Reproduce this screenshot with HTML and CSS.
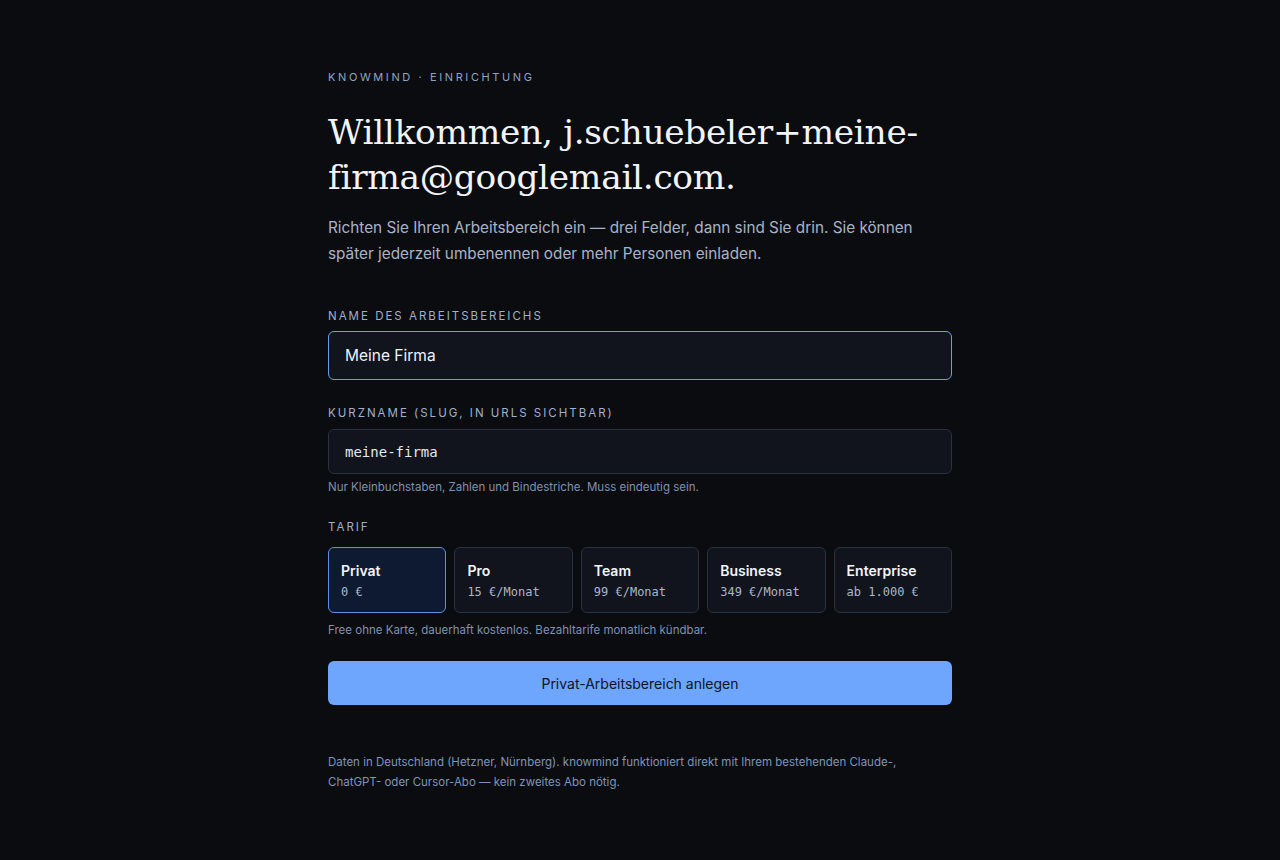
FILE: index.html
```html
<!DOCTYPE html>
<html lang="de">
<head>
<meta charset="utf-8">
<title>knowmind · Einrichtung</title>
<link rel="stylesheet" href="styles.css">
</head>
<body>
<main class="wrap">
  <div class="eyebrow">KNOWMIND · EINRICHTUNG</div>
  <h1 class="title">Willkommen, j.schuebeler+meine-firma@googlemail.com.</h1>
  <p class="lead">Richten Sie Ihren Arbeitsbereich ein — drei Felder, dann sind Sie drin. Sie können später jederzeit umbenennen oder mehr Personen einladen.</p>

  <form class="form">
    <div class="field field-name">
      <label class="label">NAME DES ARBEITSBEREICHS</label>
      <div class="input input-focus">Meine Firma</div>
    </div>
    <div class="field">
      <label class="label">KURZNAME (SLUG, IN URLS SICHTBAR)</label>
      <div class="input input-mono">meine-firma</div>
      <div class="hint">Nur Kleinbuchstaben, Zahlen und Bindestriche. Muss eindeutig sein.</div>
    </div>
    <div class="field field-plans">
      <label class="label label-plans">TARIF</label>
      <div class="plans">
        <div class="plan plan-active"><div class="plan-name">Privat</div><div class="plan-price">0 €</div></div>
        <div class="plan"><div class="plan-name">Pro</div><div class="plan-price">15 €/Monat</div></div>
        <div class="plan"><div class="plan-name">Team</div><div class="plan-price">99 €/Monat</div></div>
        <div class="plan"><div class="plan-name">Business</div><div class="plan-price">349 €/Monat</div></div>
        <div class="plan"><div class="plan-name">Enterprise</div><div class="plan-price">ab 1.000 €</div></div>
      </div>
      <div class="hint hint-plans">Free ohne Karte, dauerhaft kostenlos. Bezahltarife monatlich kündbar.</div>
    </div>
    <button type="button" class="btn">Privat-Arbeitsbereich anlegen</button>
  </form>

  <p class="foot">Daten in Deutschland (Hetzner, Nürnberg). knowmind funktioniert direkt mit Ihrem bestehenden Claude-, ChatGPT- oder Cursor-Abo — kein zweites Abo nötig.</p>
</main>
</body>
</html>
```
FILE: styles.css
```css
* { box-sizing: border-box; }
html, body { margin: 0; padding: 0; }
body {
  background: #0b0c10;
  color: #e6ebf5;
  font-family: Inter, "Noto Sans", "Liberation Sans", sans-serif;
  min-height: 860px;
}
.wrap {
  width: 624px;
  margin: 0 auto;
  padding-top: 70px;
}
.eyebrow {
  font-size: 11px;
  letter-spacing: 2.6px;
  color: #8ea3c4;
  line-height: 14px;
}
.title {
  font-family: "DejaVu Serif", "Liberation Serif", serif;
  font-weight: 400;
  font-size: 34.4px;
  line-height: 45px;
  color: #f1f4fa;
  margin: 26px 0 0;
  letter-spacing: -0.3px;
}
.lead {
  margin: 15px 0 0;
  font-size: 15.3px;
  line-height: 26px;
  color: #a8b3c7;
}
.form {
  margin-top: 42px;
  display: flex;
  flex-direction: column;
}
.field { margin-bottom: 25px; }
.field-name { margin-bottom: 26px; }
.label {
  display: block;
  font-size: 11.5px;
  letter-spacing: 2px;
  color: #9fb0cc;
  line-height: 14px;
  margin-bottom: 9px;
}
.field-name .label { margin-bottom: 8px; }
.label-plans { margin-bottom: 13px; }
.input {
  background: #11141c;
  border: 1px solid #2a3142;
  border-radius: 6px;
  height: 45px;
  padding: 0 16px;
  display: flex;
  align-items: center;
  font-size: 15.5px;
  color: #eef2fa;
}
.input-focus {
  border-color: #6a9cf0;
  height: 49px;
}
.input-mono {
  font-family: "DejaVu Sans Mono", "Liberation Mono", monospace;
  font-size: 14px;
  color: #e3e8f2;
}
.hint {
  margin-top: 5px;
  font-size: 11.5px;
  line-height: 16px;
  color: #7f91b0;
}
.hint-plans { margin-top: 9px; }
.field-plans { margin-bottom: 23px; }
.plans {
  display: grid;
  grid-template-columns: repeat(5, 1fr);
  gap: 8px;
}
.plan {
  height: 66px;
  border: 1px solid #2a3142;
  border-radius: 6px;
  background: #11141c;
  padding: 14px 12px 0;
}
.plan-active {
  background: #0e1a31;
  border-color: #5f8fe6;
}
.plan-name {
  font-size: 14px;
  font-weight: 600;
  color: #f1f4fa;
  line-height: 18px;
}
.plan-price {
  margin-top: 4px;
  font-family: "DejaVu Sans Mono", "Liberation Mono", monospace;
  font-size: 12px;
  color: #aab6cb;
  line-height: 16px;
}
.btn {
  height: 44px;
  border: 0;
  border-radius: 6px;
  background: #6ea6fd;
  color: #0d1424;
  font-family: Inter, "Noto Sans", "Liberation Sans", sans-serif;
  font-size: 14px;
  font-weight: 400;
  width: 100%;
}
.foot {
  margin: 47px 0 0;
  font-size: 11.5px;
  line-height: 20px;
  color: #7f94b8;
}
```
